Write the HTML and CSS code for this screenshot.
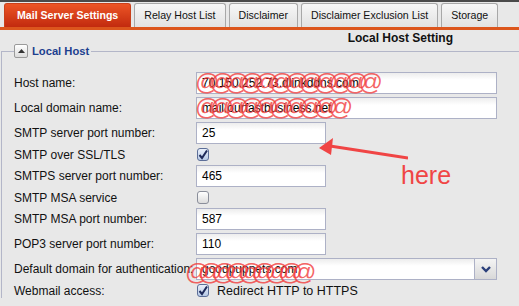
FILE: index.html
```html
<!DOCTYPE html>
<html lang="en">
<head>
    <meta charset="UTF-8">
    <title>Mail Server Settings</title>
    <link rel="stylesheet" href="styles.css">
</head>
<body>
    <ul class="tabs">
        <li class="tab active">Mail Server Settings</li>
        <li class="tab">Relay Host List</li>
        <li class="tab">Disclaimer</li>
        <li class="tab">Disclaimer Exclusion List</li>
        <li class="tab">Storage</li>
    </ul>

    <div class="page-title">Local Host Setting</div>

    <fieldset class="section">
        <legend><span class="toggle"><svg width="7" height="4" viewBox="0 0 7 4"><path d="M0 4 L3.5 0 L7 4 Z" fill="#333"/></svg></span>Local Host</legend>

        <div class="form">
            <label>Host name:</label>
            <div class="field">
                <div class="input wide">70.150.252.73.dlinkddns.com</div>
                <span class="scrib">@@@@@@@@@@@@</span>
            </div>

            <label>Local domain name:</label>
            <div class="field">
                <div class="input wide">mail.ourfastbusiness.net</div>
                <span class="scrib">@@@@@@@@@@</span>
            </div>

            <label>SMTP server port number:</label>
            <div class="field"><div class="input short">25</div></div>

            <label>SMTP over SSL/TLS</label>
            <div class="field check-row"><span class="checkbox on"><svg width="10" height="10" viewBox="0 0 10 10"><path d="M1.5 5 L4 8 L9 0.5" fill="none" stroke="#1e2a5a" stroke-width="2"/></svg></span></div>

            <label>SMTPS server port number:</label>
            <div class="field"><div class="input short">465</div></div>

            <label>SMTP MSA service</label>
            <div class="field check-row"><span class="checkbox"></span></div>

            <label>SMTP MSA port number:</label>
            <div class="field"><div class="input short">587</div></div>

            <label>POP3 server port number:</label>
            <div class="field"><div class="input short">110</div></div>

            <label>Default domain for authentication:</label>
            <div class="field">
                <div class="select">
                    <span class="select-value">goodpuppets.com</span>
                    <span class="select-btn"><svg width="10" height="7" viewBox="0 0 10 7"><path d="M1 1 L5 5 L9 1" fill="none" stroke="#2a3f7a" stroke-width="2.4"/></svg></span>
                </div>
                <span class="scrib low">@@@@@@@@@</span>
            </div>

            <label>Webmail access:</label>
            <div class="field check-row">
                <span class="checkbox on"><svg width="10" height="10" viewBox="0 0 10 10"><path d="M1.5 5 L4 8 L9 0.5" fill="none" stroke="#1e2a5a" stroke-width="2"/></svg></span>
                <span class="check-label">Redirect HTTP to HTTPS</span>
            </div>
        </div>
    </fieldset>

    <svg class="note-arrow" width="90" height="30" viewBox="0 0 90 30">
        <path d="M90 25 L12 13" stroke="#f04545" stroke-width="3" fill="none"/>
        <path d="M1 15 L15 5 L13 22 Z" fill="#f04545"/>
    </svg>
    <span class="note">here</span>
</body>
</html>
```

FILE: styles.css
```css
body {
    margin: 0;
    background: #e8e8e8;
    border-top: 2px solid #4a4a4a;
    font-family: "Liberation Sans", Arial, sans-serif;
    font-size: 12px;
    color: #111;
    overflow: hidden;
    position: relative;
    height: 304px;
}
.tabs {
    list-style: none;
    margin: 0;
    padding: 1px 0 0 4px;
    display: flex;
    border-bottom: 3px solid #dc561d;
}
.tab {
    flex: none;
    white-space: nowrap;
    height: 23px;
    line-height: 23px;
    margin-right: 3px;
    padding: 0 9px;
    font-size: 10.6px;
    color: #111;
    border: 1px solid #a8a8a8;
    border-bottom: none;
    border-radius: 3px 3px 0 0;
    background: linear-gradient(#f7f7f7, #e2e2e2);
}
.tab.active {
    padding: 0 12px;
    color: #fff;
    font-weight: bold;
    border-color: #c9401a;
    background: linear-gradient(#ec5526, #c22a0e);
}
.page-title {
    text-align: right;
    padding: 1px 66px 0 0;
    font-weight: bold;
    font-size: 12px;
    height: 15px;
}
.section {
    margin: -2px 0 0 1px;
    padding: 0 0 0 12px;
    border: 1px solid #b3b6c8;
    border-right: none;
    border-bottom: none;
    min-width: 0;
}
.section legend {
    padding: 0 2px 0 0;
    font-weight: bold;
    font-size: 11.2px;
    color: #1c3f8f;
    display: flex;
    align-items: center;
    gap: 4px;
}
.toggle {
    width: 12px;
    height: 12px;
    border: 1px solid #9a9a9a;
    border-radius: 2px;
    background: linear-gradient(#ffffff, #dcdcdc);
    display: flex;
    align-items: center;
    justify-content: center;
}
.form {
    display: grid;
    grid-template-columns: 182px 1fr;
    row-gap: 3px;
    margin-top: 14px;
    align-items: center;
}
.form label {
    white-space: nowrap;
}
.field {
    position: relative;
    display: flex;
    align-items: center;
    height: 22px;
}
.field.check-row {
    height: 15px;
}
.input {
    box-sizing: border-box;
    height: 22px;
    line-height: 20px;
    padding: 0 5px;
    border: 1px solid #adb1c6;
    background: linear-gradient(#ededed, #ffffff 35%);
    color: #000;
    white-space: nowrap;
    overflow: hidden;
}
.input.wide { width: 301px; }
.input.short { width: 130px; }
.select {
    box-sizing: border-box;
    width: 301px;
    height: 22px;
    border: 1px solid #adb1c6;
    background: linear-gradient(#ededed, #ffffff 35%);
    display: flex;
}
.select-value {
    flex: 1;
    line-height: 20px;
    padding-left: 5px;
}
.select-btn {
    width: 21px;
    border-left: 1px solid #adb1c6;
    background: linear-gradient(#f4f4f4, #d8d8d8);
    display: flex;
    align-items: center;
    justify-content: center;
}
.checkbox {
    box-sizing: border-box;
    width: 12px;
    height: 13px;
    margin-left: 1px;
    border: 1px solid #8a8e9a;
    border-radius: 3px;
    background: linear-gradient(#ffffff, #dcdcdc);
    display: flex;
    align-items: center;
    justify-content: center;
}
.checkbox.on {
    border-color: #5c6e98;
    background: linear-gradient(#e9f0fb, #b7c9e6);
}
.check-label {
    margin-left: 8px;
    font-size: 12.5px;
}
.scrib {
    position: absolute;
    left: -1px;
    top: -4px;
    font-size: 24px;
    letter-spacing: -9.5px;
    color: rgba(242, 60, 60, 0.8);
    pointer-events: none;
    white-space: nowrap;
}
.scrib.low {
    left: -11px;
    top: 0;
    letter-spacing: -11px;
}
.note-arrow {
    position: absolute;
    left: 318px;
    top: 131px;
}
.note {
    position: absolute;
    left: 401px;
    top: 159px;
    font-size: 25px;
    color: #f04545;
}
```
